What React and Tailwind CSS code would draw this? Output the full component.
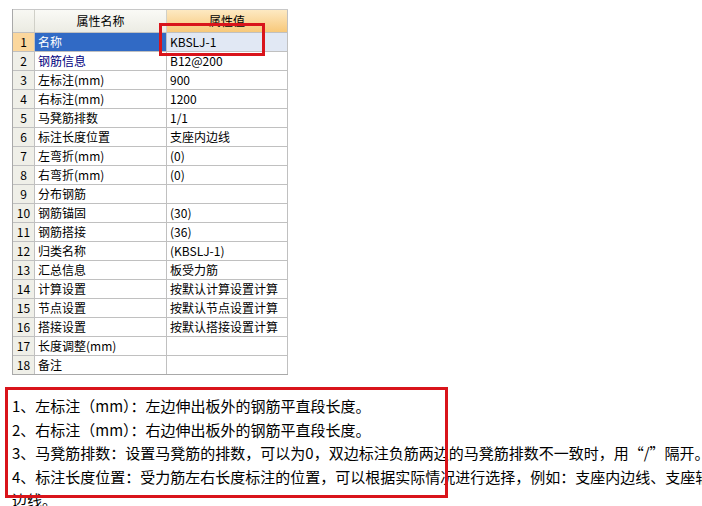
import React from 'react';

const rows = [
    ['名称', 'KBSLJ-1'],
    ['钢筋信息', 'B12@200'],
    ['左标注(mm)', '900'],
    ['右标注(mm)', '1200'],
    ['马凳筋排数', '1/1'],
    ['标注长度位置', '支座内边线'],
    ['左弯折(mm)', '(0)'],
    ['右弯折(mm)', '(0)'],
    ['分布钢筋', ''],
    ['钢筋锚固', '(30)'],
    ['钢筋搭接', '(36)'],
    ['归类名称', '(KBSLJ-1)'],
    ['汇总信息', '板受力筋'],
    ['计算设置', '按默认计算设置计算'],
    ['节点设置', '按默认节点设置计算'],
    ['搭接设置', '按默认搭接设置计算'],
    ['长度调整(mm)', ''],
    ['备注', ''],
];

const notes = [
    '1、左标注（mm）：左边伸出板外的钢筋平直段长度。',
    '2、右标注（mm）：右边伸出板外的钢筋平直段长度。',
    '3、马凳筋排数：设置马凳筋的排数，可以为0，双边标注负筋两边的马凳筋排数不一致时，用“/”隔开。',
    '4、标注长度位置：受力筋左右长度标注的位置，可以根据实际情况进行选择，例如：支座内边线、支座轴线、支座中心线、支座外',
    '边线。',
];

const PropertyTable = () => (
    <div className="w-[276px] border-l border-b border-[#a9a9a9] text-[12px] text-black">
        {/* Header */}
        <div className="flex h-[23px] border-t border-[#c8c8c8]">
            <div className="w-[22px] shrink-0 bg-gradient-to-b from-[#f8f8f3] to-[#ebebe2] border-r border-[#d0d0c8]" />
            <div className="w-[132px] shrink-0 flex items-center justify-center bg-gradient-to-b from-[#fafaf6] to-[#ecece4] border-r border-[#d0d0c8]">
                属性名称
            </div>
            <div className="w-[121px] shrink-0 flex items-center justify-center bg-gradient-to-b from-[#fde9c2] to-[#f7c879] border-r border-[#c0c0c0]">
                属性值
            </div>
        </div>
        {rows.map(([name, value], i) => {
            const selected = i === 0;
            return (
                <div key={i} className="flex h-[19px] border-t border-[#c0c0c0]">
                    <div className={`w-[22px] shrink-0 flex items-center justify-center border-r border-[#c0c0c0] ${selected ? 'bg-[#fbd79d]' : 'bg-[#efefe8]'}`}>
                        {i + 1}
                    </div>
                    <div className={`w-[132px] shrink-0 flex items-center pl-[3px] border-r border-[#c0c0c0] ${selected ? 'bg-[#316ac5] text-white' : i === 1 ? 'text-[#000080]' : ''}`}>
                        {name}
                    </div>
                    <div className={`w-[121px] shrink-0 flex items-center pl-[3px] border-r border-[#c0c0c0] ${selected ? 'bg-[#e1e8f4]' : 'bg-white'}`}>
                        {value}
                    </div>
                </div>
            );
        })}
    </div>
);

const App = () => {
    return (
        <div
            className="relative w-[702px] h-[506px] overflow-hidden bg-white"
            style={{ fontFamily: '"Noto Sans CJK SC", "DejaVu Sans", sans-serif' }}
        >
            <div className="pt-[9px] pl-[12px]">
                <PropertyTable />
            </div>

            {/* Notes */}
            <div className="mt-[19px] pl-[12px] text-[15px] leading-[23.5px] text-black whitespace-nowrap">
                {notes.map((line, i) => (
                    <div key={i}>{line}</div>
                ))}
            </div>

            {/* Red highlight boxes */}
            <div className="absolute left-[159px] top-[23px] w-[106px] h-[33px] border-[3px] border-[#d9141b]" />
            <div className="absolute left-[5px] top-[387px] w-[443px] h-[111px] border-[3px] border-[#d9141b]" />
        </div>
    );
};

export default App;
